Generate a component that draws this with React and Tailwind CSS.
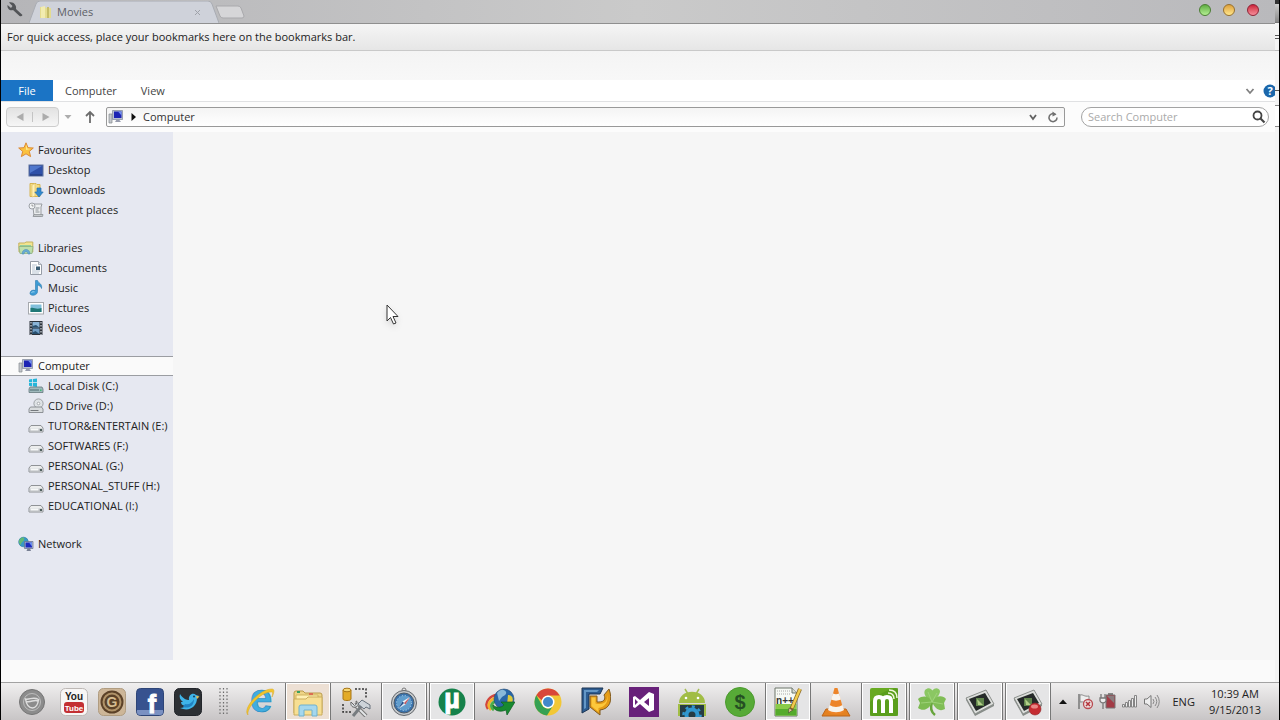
import React, { useState } from 'react';

const favourites = [
  { label: 'Desktop', icon: DesktopIcon },
  { label: 'Downloads', icon: DownloadsIcon },
  { label: 'Recent places', icon: RecentIcon },
];

const libraries = [
  { label: 'Documents', icon: DocumentIcon },
  { label: 'Music', icon: MusicIcon },
  { label: 'Pictures', icon: PictureIcon },
  { label: 'Videos', icon: VideoIcon },
];

const drives = [
  { label: 'Local Disk (C:)', icon: SystemDriveIcon },
  { label: 'CD Drive (D:)', icon: CdDriveIcon },
  { label: 'TUTOR&ENTERTAIN (E:)', icon: DriveIcon },
  { label: 'SOFTWARES (F:)', icon: DriveIcon },
  { label: 'PERSONAL (G:)', icon: DriveIcon },
  { label: 'PERSONAL_STUFF (H:)', icon: DriveIcon },
  { label: 'EDUCATIONAL (I:)', icon: DriveIcon },
];

const groups = [
  { label: 'Favourites', icon: StarIcon, items: favourites },
  { label: 'Libraries', icon: LibrariesIcon, items: libraries },
  { label: 'Computer', icon: ComputerIcon, items: drives },
  { label: 'Network', icon: NetworkIcon, items: [] },
];

const pinned = [
  { name: 'YouTube', icon: YouTubeIcon },
  { name: 'Grooveshark', icon: GrooveIcon },
  { name: 'Facebook', icon: FacebookIcon },
  { name: 'Twitter', icon: TwitterIcon },
];

const tasks = [
  { name: 'Internet Explorer', icon: ExplorerIcon, open: false },
  { name: 'File Explorer', icon: FoldersIcon, open: true, warm: true },
  { name: 'SQL Tools', icon: ToolsIcon, open: false },
  { name: 'Safari', icon: CompassIcon, open: true },
  { name: 'uTorrent', icon: TorrentIcon, open: true },
  { name: 'Download Manager', icon: DownloadManagerIcon, open: false },
  { name: 'Chrome', icon: ChromeIcon, open: false },
  { name: 'VMware', icon: ArrowsIcon, open: false },
  { name: 'Visual Studio', icon: VisualStudioIcon, open: false },
  { name: 'Android Tools', icon: AndroidIcon, open: false },
  { name: 'Money', icon: MoneyIcon, open: false },
  { name: 'Notepad++', icon: NotepadIcon, open: true },
  { name: 'VLC', icon: ConeIcon, open: false },
  { name: 'Mobogenie', icon: MobogenieIcon, open: true },
  { name: 'Clover', icon: CloverIcon, open: true },
  { name: 'Screen Capture', icon: CaptureIcon, open: true },
  { name: 'Screen Recorder', icon: RecorderIcon, open: true },
];

/* ---------- navigation icons ---------- */

function SmallIcon({ children }) {
  return (
    <svg width="16" height="16" viewBox="0 0 16 16" className="shrink-0" aria-hidden="true">
      {children}
    </svg>
  );
}

function StarIcon() {
  return (
    <SmallIcon>
      <path d="M8 .8 10 5.7 15.3 6 11.3 9.4 12.6 14.6 8 11.8 3.4 14.6 4.7 9.4 .7 6 6 5.7Z" fill="#fbc23f" stroke="#dc8a35" strokeLinejoin="round" />
      <path d="M8 2.5 9.3 6.5 13 6.9 8 8Z" fill="#ffe88a" />
    </SmallIcon>
  );
}

function DesktopIcon() {
  return (
    <SmallIcon>
      <rect x="1" y="3" width="14" height="11" fill="#2f50a8" stroke="#5b6f9c" />
      <path d="M2 4h12L2 11Z" fill="#5077cc" />
      <path d="M2 13h12" stroke="#203570" />
    </SmallIcon>
  );
}

function DownloadsIcon() {
  return (
    <SmallIcon>
      <path d="M2 1.500h6l1 1h3v12H2Z" fill="#f5dd83" stroke="#d6b553" />
      <path d="M4 3 7 1.500v12.500l-3 1Z" fill="#fff1b5" stroke="#d8bd64" strokeWidth=".6" />
      <path d="M9 6h4v4h2.200L11 15 6.800 10H9Z" fill="#3389ce" stroke="#2671ae" strokeWidth=".7" />
    </SmallIcon>
  );
}

function RecentIcon() {
  return (
    <SmallIcon>
      <path d="M5 2h9l-1 3v9H6L5 5Z" fill="#eceef0" stroke="#9a9da2" />
      <path d="M5 14.500h9.500l.5-2H6Z" fill="#c4c7cb" stroke="#85898e" strokeWidth=".7" />
      <path d="M7.500 6h4M7.500 8h3M7.500 10h4" stroke="#777b82" strokeWidth=".8" />
      <circle cx="4" cy="4" r="3" fill="#f1f3f5" stroke="#9da1a7" />
      <path d="M4 2.500V4h1.500" stroke="#777" fill="none" strokeWidth=".7" />
    </SmallIcon>
  );
}

function LibrariesIcon() {
  return (
    <SmallIcon>
      <path d="M.8 3h6l1-1h7v10H1Z" fill="#f2e48f" stroke="#c4b160" />
      <path d="M2 5h11v7H2Z" fill="#94cda0" />
      <path d="M1 6.500h14l-1 7H2Z" fill="#bfe0ab" stroke="#86ad78" strokeWidth=".7" />
      <path d="M4 14c0-6 8-6 8 0h-2c0-3-4-3-4 0Z" fill="#68abd4" stroke="#4d8eb5" strokeWidth=".6" />
    </SmallIcon>
  );
}

function DocumentIcon() {
  return (
    <SmallIcon>
      <path d="M2.500 1.500h8l3 3v10h-11Z" fill="#fff" stroke="#969ca6" />
      <path d="M10.500 1.500v3h3" fill="#dbe1e9" stroke="#969ca6" strokeWidth=".8" />
      <path d="M4 5h5M4 7h3M4 9h3M4 11h8M4 13h7" stroke="#a3b2c4" strokeWidth=".8" />
      <path d="M8 6.500h4v3.500H8Z" fill="#3d5f76" />
    </SmallIcon>
  );
}

function MusicIcon() {
  return (
    <SmallIcon>
      <path d="M7.500.5h2c1 3 5 3 4 8-.5-2-2-3-4-3.500v6.500c0 4.500-8 5-7.500 1.500.3-2.500 3-3.500 5.500-2.500Z" fill="#3d9bd5" stroke="#2c78ab" strokeWidth=".6" />
      <path d="M3.500 12.500c1-.8 2-.8 3-.6" stroke="#a8dcf5" fill="none" />
    </SmallIcon>
  );
}

function PictureIcon() {
  return (
    <SmallIcon>
      <rect x=".5" y="2.500" width="15" height="11.500" fill="#fff" stroke="#a6a9ae" />
      <path d="M2.500 4.500h11v7.500h-11Z" fill="#80bfdb" />
      <path d="M2.500 8c4-1 5 2 11 0v4h-11Z" fill="#1f7876" />
    </SmallIcon>
  );
}

function VideoIcon() {
  return (
    <SmallIcon>
      <path d="M1.500 1h13v14h-13Z" fill="#2c323a" />
      <path d="M4.500 2h7v5.500h-7Z" fill="#8ab4d6" />
      <path d="M4.500 8.500h7V14h-7Z" fill="#6e9cc4" />
      <path d="M4.500 7.500V6L8 5l3.500 2.500ZM4.500 14v-1.500l3-1.500 4 3Z" fill="#28506f" />
      <path d="M3 2v13M13 2v13" stroke="#d3d9df" strokeWidth="1.200" strokeDasharray="1.500 1.500" />
    </SmallIcon>
  );
}

function ComputerIcon() {
  return (
    <SmallIcon>
      <path d="M1 5h3v9H1Z" fill="#c4c7cc" stroke="#85898e" strokeWidth=".7" />
      <path d="M4.500 1.500h10v9h-10Z" fill="#b8c0d2" stroke="#7d8598" strokeWidth=".7" />
      <path d="M6 2.500h7.500v6.500H6Z" fill="#1c23b4" />
      <path d="M10 2.500h3.500v4Z" fill="#7290ee" />
      <path d="M8.500 10.500h2.500l2 2.500H7Z" fill="#969bad" />
    </SmallIcon>
  );
}

function DriveIcon() {
  return (
    <SmallIcon>
      <path d="M3 7.500h10l2 2.500v4H1v-4Z" fill="#eceded" stroke="#8f9296" strokeLinejoin="round" />
      <path d="M1.500 10.500h13v3h-13Z" fill="#b9bcc0" />
      <path d="M2.500 10.500h8v2h-8Z" fill="#f7f8f8" />
      <path d="M12 11h2v2h-2Z" fill="#4f5f5e" />
    </SmallIcon>
  );
}

function SystemDriveIcon() {
  return (
    <SmallIcon>
      <path d="M1 1.500 4.200 1v3.300H1ZM5 1l4-.6v3.900H5ZM1 5h3.200v3.300L1 7.800ZM5 5h4v4l-4-.6Z" fill="#25b6da" />
      <path d="M2 9h12l1 2v3.500H1V11Z" fill="#a0b9bd" stroke="#64787d" strokeWidth=".8" />
      <path d="M2 11.500h9v1H2Z" fill="#4d6b70" />
      <path d="M12 11.500h1.500V13H12Z" fill="#3cbb75" />
    </SmallIcon>
  );
}

function CdDriveIcon() {
  return (
    <SmallIcon>
      <circle cx="10.500" cy="5.500" r="4.600" fill="#dfe3e6" stroke="#8e9296" strokeWidth=".8" />
      <circle cx="10.500" cy="5.500" r="1.300" fill="#fff" stroke="#8e9296" strokeWidth=".7" />
      <path d="M2.500 9h11l1.500 2v3.500H1V11Z" fill="#d9dcde" stroke="#85898d" strokeWidth=".9" />
      <path d="M2.500 12.500h8" stroke="#74787c" />
    </SmallIcon>
  );
}

function NetworkIcon() {
  return (
    <SmallIcon>
      <circle cx="5.500" cy="6" r="4.800" fill="#3898c6" stroke="#29799f" strokeWidth=".6" />
      <path d="M2 3c3-3 5-1 4 1S3 6 3 9C0 7 1 4 2 3Z" fill="#62ba75" />
      <path d="M6.500 5.500h8.500v7H6.500Z" fill="#b4bfd4" stroke="#5f6b8a" strokeWidth=".7" />
      <path d="M7.500 6.500h6.500v5H7.500Z" fill="#1c29bd" />
      <path d="M11 6.500h3v4Z" fill="#6d93ee" />
      <path d="M9.500 12.500h2.500l1 2.500H8.500Z" fill="#777f93" />
    </SmallIcon>
  );
}

/* ---------- taskbar icons ---------- */

function AppIcon({ children }) {
  return (
    <svg width="30" height="30" viewBox="0 0 30 30" className="shrink-0" fontFamily="Liberation Sans, sans-serif" aria-hidden="true">
      {children}
    </svg>
  );
}

function StartIcon() {
  return (
    <AppIcon>
      <circle cx="15" cy="15" r="12.500" fill="#8c8c8c" stroke="#747474" />
      <circle cx="15" cy="15" r="8.500" fill="none" stroke="#bdbdbd" />
      <path d="M8.500 12c4 1 8-3 13 .5-.5 5-3 8.500-6 8.500-4 0-6-3-7-9Zm.5 2.500c5 1.500 8-2.500 12-.5" fill="none" stroke="#dedede" strokeWidth="1.500" />
    </AppIcon>
  );
}

function YouTubeIcon() {
  return (
    <AppIcon>
      <rect x="1.500" y="1.500" width="27" height="27" rx="5" fill="#f8f6f5" stroke="#bdb8b5" />
      <text x="15" y="13" textAnchor="middle" fontSize="10" fontWeight="700" fill="#222">You</text>
      <rect x="5" y="15" width="20" height="11" rx="3" fill="#c32f32" />
      <text x="15" y="23.500" textAnchor="middle" fontSize="8" fontWeight="700" fill="#fff">Tube</text>
    </AppIcon>
  );
}

function GrooveIcon() {
  return (
    <AppIcon>
      <rect x="1.500" y="1.500" width="27" height="27" rx="5" fill="#cdb698" stroke="#b09c80" />
      <circle cx="15" cy="15" r="11.500" fill="#5b4128" />
      <circle cx="15" cy="15" r="8.500" fill="none" stroke="#b09369" strokeWidth="2" />
      <text x="15" y="20" textAnchor="middle" fontSize="14" fontWeight="700" fill="#d5bd92">G</text>
    </AppIcon>
  );
}

function FacebookIcon() {
  return (
    <AppIcon>
      <rect x="1.500" y="1.500" width="27" height="27" rx="4" fill="#37528f" stroke="#2e4577" />
      <path d="M2 23h26v2q0 3-3 3H5q-3 0-3-3Z" fill="#7b91c2" />
      <text x="17" y="26" textAnchor="middle" fontSize="25" fontWeight="700" fill="#fff" stroke="#fff">f</text>
    </AppIcon>
  );
}

function TwitterIcon() {
  return (
    <AppIcon>
      <rect x="1.500" y="1.500" width="27" height="27" rx="5" fill="#2d3034" stroke="#22252a" />
      <path d="M7 7c3 5 7 6 9 6-1-5 4-8 7-5l3 1-2 2c0 9-8 14-17 10 3 0 4-1 5-2-3-1-4-2-4-4h2c-3-2-4-5-3-8Z" fill="#3fb4e8" />
      <path d="M12 17c4 1 7-1 9-5 0 7-5 10-11 8Z" fill="#2183c3" />
      <path d="m23 9 3.500.5L24 12Z" fill="#edbd4a" />
      <circle cx="21" cy="9.500" r="1" fill="#163c56" />
    </AppIcon>
  );
}

function ExplorerIcon() {
  return (
    <AppIcon>
      <text x="16" y="25" textAnchor="middle" fontSize="40" fontWeight="700" fill="#42addf" stroke="#2485bc" strokeWidth=".6">e</text>
      <path d="M3 28C-3 22 14 2 27 2c3 0 2 4 0 8 1-4 1-5-1-5C15 5 1 22 3 28Z" fill="#f2c52d" stroke="#d9a71e" strokeWidth=".5" />
    </AppIcon>
  );
}

function FoldersIcon() {
  return (
    <AppIcon>
      <path d="M1 6q0-2 2-2h7l2 2h15q2 0 2 2v18H1Z" fill="#eed486" stroke="#ba9b4b" />
      <path d="M3 8h22v17H3Z" fill="#fff0b3" stroke="#d1b461" />
      <path d="M1 12h12l2-2h14v18H1Z" fill="#f7df93" stroke="#cbad5c" />
      <path d="M4 5h3" stroke="#37a060" strokeWidth="2" />
      <path d="M16 7h4" stroke="#dc6d52" strokeWidth="2" />
      <path d="M6 29V20q0-2 2-2h14q2 0 2 2v9h-5v-6h-8v6Z" fill="#a5d7ed" stroke="#6fb1cf" />
    </AppIcon>
  );
}

function ToolsIcon() {
  return (
    <AppIcon>
      <path d="M2 3v9c0 2 8 2 8 0V3" fill="#e3ab27" stroke="#a87617" />
      <ellipse cx="6" cy="3" rx="4" ry="1.800" fill="#f6d773" stroke="#a87617" />
      <path d="M14 2h11v10M2 17v8h9" fill="none" stroke="#333" strokeWidth="1.500" strokeDasharray="2 1.500" />
      <path d="m13 17 12 12" stroke="#777" strokeWidth="4" />
      <path d="m13 17 12 12" stroke="#e3e5e7" strokeWidth="2" />
      <path d="M10 15c-1 4 2 6 5 5s3-5 0-6l.5 3-2 1.500Z" fill="#d5d9dd" stroke="#666" />
      <path d="m12 29 10-12" stroke="#777c80" strokeWidth="3" />
      <path d="m17 17 4-4 8 5v4l-4-2-2 2Z" fill="#cdd3d9" stroke="#68727d" />
    </AppIcon>
  );
}

function CompassIcon() {
  return (
    <AppIcon>
      <circle cx="15" cy="3" r="2" fill="none" stroke="#777" />
      <circle cx="15" cy="16" r="12.500" fill="#c4c8cb" stroke="#65696e" />
      <circle cx="15" cy="16" r="10" fill="#3971aa" stroke="#4c5a68" />
      <circle cx="15" cy="16" r="7.500" fill="#609dcd" stroke="#b6d6ed" strokeDasharray="1 2" />
      <path d="m21 10-4.500 7.500-3-3Z" fill="#eff5fa" />
      <path d="m9 22 4.500-7.500 3 3Z" fill="#dce9f4" />
      <path d="m21 10-4.500 7.500L15 16Z" fill="#c35a61" />
      <path d="m9 22 4.500-7.500L15 16Z" fill="#264e89" />
    </AppIcon>
  );
}

function TorrentIcon() {
  return (
    <AppIcon>
      <circle cx="15" cy="15" r="13.500" fill="#16824b" />
      <text x="15" y="21" textAnchor="middle" fontSize="27" fontWeight="700" fill="#fff" stroke="#fff">µ</text>
    </AppIcon>
  );
}

function DownloadManagerIcon() {
  return (
    <AppIcon>
      <path d="M3 22C-2 15 7 7 13 8" fill="none" stroke="#d2463d" strokeWidth="2.500" />
      <path d="M6 23C0 17 7 10 14 11" fill="none" stroke="#f3b22f" strokeWidth="2.500" />
      <path d="M9 23c-5-4-2-9 6-10" fill="none" stroke="#4bae48" strokeWidth="3" />
      <circle cx="19" cy="12" r="10" fill="#2866a7" stroke="#244a70" strokeWidth=".6" />
      <path d="M12 6c4-5 8-3 9-1s-2 4-4 5l-3 4Z" fill="#88b8d8" />
      <path d="M23 8c4 0 6 3 4 8l-5 2Z" fill="#dcc93b" />
      <path d="M8 18c3 3 8 3 11 0l-3-3 14 0-8 13-1-5c-7 3-13 0-13-5Z" fill="#178a30" stroke="#115b27" strokeWidth=".7" />
    </AppIcon>
  );
}

function ChromeIcon() {
  return (
    <AppIcon>
      <circle cx="15" cy="15" r="13.500" fill="#f2c735" />
      <path d="M3.300 8.200A13.500 13.500 0 0 1 26.700 8.500H15a6.500 6.500 0 0 0-6 5Z" fill="#d9473a" />
      <path d="M3.300 8.200A13.500 13.500 0 0 0 14 28.500l5.500-9A6.500 6.500 0 0 1 9 18Z" fill="#36a153" />
      <circle cx="15" cy="15" r="6.500" fill="#fff" />
      <circle cx="15" cy="15" r="5" fill="#4289ca" />
    </AppIcon>
  );
}

function ArrowsIcon() {
  return (
    <AppIcon>
      <path d="M1 1h21l-3 6H8v15l-7 4Z" fill="#2d5c91" stroke="#1c3553" />
      <path d="M3 3h15l-2 2H5v16l-2 1Z" fill="#6497c6" />
      <path d="M9 9h7v6h2c5 0 7-3 5-7l5-6c4 11 1 20-9 21v5L9 20Z" fill="#e59b16" stroke="#805b20" />
      <path d="M10.500 10.500h4v6c9 2 12-2 12-9 1 8-3 13-9 13.500V25l-7-6Z" fill="#fcc83c" />
    </AppIcon>
  );
}

function VisualStudioIcon() {
  return (
    <AppIcon>
      <path d="M0 0h30v30H0Z" fill="#68217a" />
      <path fillRule="evenodd" d="m20 5 5 2v16l-5 2-9-8-5 4-2-1V10l2-1 5 4Zm0 6-5 4 5 4ZM6 12v6l3-3Z" fill="#fff" />
    </AppIcon>
  );
}

function AndroidIcon() {
  return (
    <AppIcon>
      <path d="m8 2 3 5M22 2l-3 5" stroke="#a4bd51" strokeWidth="1.500" />
      <path d="M2 16C2 1 28 1 28 16Z" fill="#a1bd45" />
      <circle cx="9" cy="11" r="1.300" fill="#fff" />
      <circle cx="21" cy="11" r="1.300" fill="#fff" />
      <path d="M1 17h28v12H1Z" fill="#a1bd45" />
      <path d="M3 18h24v12H3Z" fill="#263b43" />
      <circle cx="15" cy="28" r="5.500" fill="none" stroke="#3197cf" strokeWidth="4" />
      <circle cx="15" cy="28" r="8.500" fill="none" stroke="#3197cf" strokeWidth="2.500" strokeDasharray="3 3.600" />
    </AppIcon>
  );
}

function MoneyIcon() {
  return (
    <AppIcon>
      <circle cx="15" cy="15" r="14.500" fill="#57aa37" stroke="#4b9b2e" />
      <text x="15" y="22" textAnchor="middle" fontSize="20" fontWeight="700" fill="#254f23">$</text>
    </AppIcon>
  );
}

function NotepadIcon() {
  return (
    <AppIcon>
      <path d="M2 1h17l5 5v23H2Z" fill="#f7faf5" stroke="#6c746b" />
      <path d="M2.500 17h21v11.500h-21Z" fill="#8acb49" />
      <path d="M2.500 22h21v6.500h-21Z" fill="#55ab2d" />
      <path d="M19 1v5h5" fill="#d5dad3" stroke="#6c746b" />
      <path d="M4 4h14M4 7h14" stroke="#aaa" strokeDasharray="1 1" />
      <text x="12" y="17" textAnchor="middle" fontSize="10" fontWeight="700" fill="#333">n++</text>
      <path d="M27 2 18 23" stroke="#876825" strokeWidth="4" />
      <path d="M27 2 19 21" stroke="#f1ca4c" strokeWidth="2.500" />
      <path d="m16 21-.5 5 4-3Z" fill="#e9c995" stroke="#333" strokeWidth=".5" />
    </AppIcon>
  );
}

function ConeIcon() {
  return (
    <AppIcon>
      <path d="M5 22h20l4 7H1Z" fill="#e48120" stroke="#bd6519" />
      <path d="M13.500 1h3L23 25c-4 3-12 3-16 0Z" fill="#ed8428" />
      <path d="m12 6.500-2 6c3 1.500 7 1.500 10 0l-2-6c-2 1-4 1-6 0ZM8.500 18 7 23c5 3 11 3 16 0l-1.500-5c-4 2.500-9 2.500-13 0Z" fill="#f7f3ed" />
    </AppIcon>
  );
}

function MobogenieIcon() {
  return (
    <AppIcon>
      <rect x="1" y="1" width="28" height="28" rx="2" fill="#68aa22" />
      <path d="M1 15C10 7 18 2 29 1v28H1Z" fill="#4f9417" opacity=".55" />
      <path d="M6 26V14q0-4 4-4t4 4v12m0-12q0-4 4-4t4 4v12" fill="none" stroke="#fff" strokeWidth="4" />
      <path d="M19 6q6 0 6 6M20 3q8 0 8 8" fill="none" stroke="#eef8d9" strokeWidth="1.500" />
    </AppIcon>
  );
}

function CloverIcon() {
  return (
    <AppIcon>
      <path d="M15 15c-2 6-1 10 3 13" fill="none" stroke="#67a43c" strokeWidth="2.500" />
      <path d="M15 15C9 11 6 7 8 3c3-3 6-2 7.500.5C18 0 22 1 23 4c0 4-4 8-8 11Z" fill="#8bc763" />
      <path d="M15 15c4-7 11-7 14-3l-2 4 1 6c-5 3-10 0-13-7Z" fill="#80bd56" />
      <path d="M15 15c-3-6-9-7-14-3l2 4-2 5c5 4 12 1 14-6Z" fill="#7dbb52" />
      <path d="M15 15 11 5m4 10 5-9m-5 9 11 2m-11-2-11 1" stroke="#a4d580" strokeWidth=".8" />
    </AppIcon>
  );
}

function CaptureShape() {
  return (
    <>
      <path d="m1 11 20-8 8 14-19 10Z" fill="#dcdedb" stroke="#8b8f8c" />
      <path d="m4 12 16-6 6 10-15 8Z" fill="#252a29" />
      <path d="M11 11h8v8h-8Z" fill="#60854c" />
      <path d="m12 12 6 6h-5Z" fill="#b1ce88" />
      <path d="m10 27 19-10v2L10 29 1 13v-2Z" fill="#888d89" />
    </>
  );
}

function CaptureIcon() {
  return (
    <AppIcon>
      <CaptureShape />
    </AppIcon>
  );
}

function RecorderIcon() {
  return (
    <AppIcon>
      <CaptureShape />
      <circle cx="22" cy="22" r="6" fill="#c52c31" stroke="#8e2529" strokeWidth=".6" />
      <ellipse cx="21.500" cy="19.500" rx="3.500" ry="2" fill="#e98785" />
    </AppIcon>
  );
}

/* ---------- window parts ---------- */

function TitleBar() {
  return (
    <div className="flex h-6 items-end border-b border-[#8f8f8f] bg-linear-to-r from-[#b5b5b8] via-[#cacaca] to-[#b9b9bc]">
      <button type="button" aria-label="Settings" className="mb-1 w-7 pl-[5px]">
        <svg width="18" height="18" viewBox="0 0 18 18">
          <path d="M3 1.500 6.500 5 5 7 1.500 4C1 8 4 10 7 9l6.500 6q2 1 3-1L10 8C11 4 7 0 3 1.500Z" fill="#525457" />
        </svg>
      </button>
      <div className="relative flex h-[22px] w-[190px] items-center pl-[10px] pr-[18px]">
        <svg className="absolute inset-0 h-full w-full" viewBox="0 0 190 22" preserveAspectRatio="none" aria-hidden="true">
          <path d="M0 22 7 3q1-3 4-3h168q3 0 4 3l7 19" fill="#cfd2da" stroke="#a9acb3" />
        </svg>
        <svg className="relative" width="14" height="14" viewBox="0 0 14 14" aria-hidden="true">
          <path d="M1 2h5l1 1h5v10H1Z" fill="#e4dc91" />
          <path d="m2 2 4-1v12H2Z" fill="#f2ecb0" />
          <path d="M8 2h2v11H8Z" fill="#c5bc68" />
        </svg>
        <span className="relative ml-1 text-[#5d6067]">Movies</span>
        <button type="button" aria-label="Close tab" className="relative ml-auto">
          <svg width="7" height="7" viewBox="0 0 7 7">
            <path d="m1 1 5 5M6 1 1 6" stroke="#9fa2a9" />
          </svg>
        </button>
      </div>
      <button type="button" aria-label="New tab" className="-ml-1 mb-1">
        <svg width="30" height="14" viewBox="0 0 30 14">
          <path d="M1 1h22q2 0 3 2l3 8q0 2-2 2H8q-2 0-3-2Z" fill="#d6d6d8" stroke="#a9a9ac" />
        </svg>
      </button>
      <div className="mb-[7px] ml-auto mr-4 flex gap-3">
        <button type="button" aria-label="Minimise" className="h-3 w-3 rounded-full border border-[#4a7e32] bg-linear-to-b from-[#5fae42] to-[#b4ef92]" />
        <button type="button" aria-label="Maximise" className="h-3 w-3 rounded-full border border-[#97702d] bg-linear-to-b from-[#dda13b] to-[#ffe78b]" />
        <button type="button" aria-label="Close" className="h-3 w-3 rounded-full border border-[#8d2335] bg-linear-to-b from-[#cc1d3b] to-[#f58c9b]" />
      </div>
    </div>
  );
}

function Ribbon() {
  return (
    <div className="flex h-[22px] items-center border-b border-[#e0e1e3] bg-white text-[#444]">
      <button type="button" className="h-full w-[52px] bg-[#1b74c5] text-white">File</button>
      <button type="button" className="ml-3">Computer</button>
      <button type="button" className="ml-6">View</button>
      <div className="ml-auto flex shrink-0 items-center">
        <button type="button" aria-label="Expand ribbon" className="mr-2">
          <svg width="10" height="8" viewBox="0 0 10 8">
            <path d="m1.500 2 3.500 4L8.500 2" fill="none" stroke="#808080" strokeWidth="1.800" />
          </svg>
        </button>
        <button type="button" aria-label="Help" className="w-3 overflow-hidden">
          <svg width="14" height="14" viewBox="0 0 14 14" className="max-w-none">
            <circle cx="7" cy="7" r="6.500" fill="#1b67ab" />
            <text x="7" y="11" textAnchor="middle" fontSize="11" fontWeight="700" fill="#fff">?</text>
          </svg>
        </button>
      </div>
    </div>
  );
}

function AddressRow() {
  const [query, setQuery] = useState('');

  return (
    <div className="flex h-[30px] items-center bg-[#fcfcfc] pb-px pl-[5px] pr-[6px]">
      <div className="flex h-5 w-[53px] shrink-0 items-center rounded border border-[#cdcdcd] bg-linear-to-b from-[#e2e2e2] to-[#f6f6f6]">
        <button type="button" aria-label="Back" className="flex flex-1 justify-center border-r border-[#c4c4c4]">
          <svg width="8" height="10" viewBox="0 0 8 10">
            <path d="M7.500 1v8L.5 5Z" fill="#acacac" />
          </svg>
        </button>
        <button type="button" aria-label="Forward" className="flex flex-1 justify-center">
          <svg width="8" height="10" viewBox="0 0 8 10">
            <path d="M.5 1v8l7-4Z" fill="#acacac" />
          </svg>
        </button>
      </div>
      <button type="button" aria-label="Recent locations" className="ml-[5px]">
        <svg width="8" height="6" viewBox="0 0 8 6">
          <path d="M.5 1h7L4 5Z" fill="#adadad" />
        </svg>
      </button>
      <button type="button" aria-label="Up one level" className="ml-3 mr-[10px]">
        <svg width="12" height="14" viewBox="0 0 12 14">
          <path d="M6 13V2M2 6l4-4 4 4" fill="none" stroke="#6c6c6c" strokeWidth="1.800" />
        </svg>
      </button>
      <div className="flex h-5 flex-1 items-center rounded-xs border border-[#999] bg-linear-to-b from-[#f4f4f4] to-white px-px">
        <ComputerIcon />
        <svg className="mx-[7px]" width="5" height="8" viewBox="0 0 5 8" aria-hidden="true">
          <path d="M.5 0v8L5 4Z" fill="#111" />
        </svg>
        <button type="button" className="text-[#333]">Computer</button>
        <button type="button" aria-label="Previous locations" className="ml-auto mr-[10px]">
          <svg width="8" height="8" viewBox="0 0 8 8">
            <path d="m1 2 3 4 3-4" fill="none" stroke="#626262" strokeWidth="1.800" />
          </svg>
        </button>
        <button type="button" aria-label="Refresh" className="mr-1">
          <svg width="12" height="12" viewBox="0 0 12 12">
            <path d="M8.500 3.500a4 4 0 1 0 1.500 3" fill="none" stroke="#707070" strokeWidth="1.500" />
            <path d="M5.500.5 9.500 3.500 5.500 5.500Z" fill="#707070" />
          </svg>
        </button>
      </div>
      <form className="ml-4 flex h-5 w-[188px] shrink-0 items-center rounded-full border border-[#a3a3a3] bg-white px-[6px]" onSubmit={(e) => e.preventDefault()}>
        <input
          type="search"
          aria-label="Search Computer"
          placeholder="Search Computer"
          value={query}
          onChange={(e) => setQuery(e.target.value)}
          className="min-w-0 flex-1 bg-transparent outline-none placeholder:text-[#aaa]"
        />
        <button type="submit" aria-label="Search" className="-mr-1">
          <svg width="14" height="14" viewBox="0 0 14 14">
            <circle cx="5.500" cy="5.500" r="4" fill="none" stroke="#444" strokeWidth="1.800" />
            <path d="m8.500 8.500 4 4" stroke="#444" strokeWidth="2.200" />
          </svg>
        </button>
      </form>
    </div>
  );
}

function TreeGroup({ group, selected, onSelect }) {
  const Icon = group.icon;
  const active = selected === group.label;

  return (
    <div>
      <button
        type="button"
        onClick={() => onSelect(group.label)}
        className={`flex h-5 w-full items-center gap-1 border-y pl-[17px] ${
          active ? 'border-[#9b9da2] bg-[#fafafa]' : 'border-transparent'
        }`}
      >
        <Icon />
        {group.label}
      </button>
      {group.items.map((item) => (
        <button
          key={item.label}
          type="button"
          onClick={() => onSelect(item.label)}
          className="flex h-5 w-full items-center gap-1 whitespace-nowrap pl-[27px]"
        >
          <item.icon />
          {item.label}
        </button>
      ))}
    </div>
  );
}

function Tray() {
  return (
    <div className="ml-auto flex shrink-0 items-center text-[#222]">
      <button type="button" aria-label="Show hidden icons" className="mr-[10px]">
        <svg width="8" height="5" viewBox="0 0 8 5">
          <path d="M0 5 4 .5 8 5Z" fill="#111" />
        </svg>
      </button>
      <div className="flex items-center gap-[5px]">
        <svg width="17" height="17" viewBox="0 0 17 17" aria-label="Action centre">
          <path d="M2 1v15" stroke="#777" strokeWidth="1.500" />
          <path d="M3 2c3-1 4 2 9 1v7c-4 1-5-2-9-1Z" fill="#eee" stroke="#8b8b8b" />
          <circle cx="11" cy="11" r="4.500" fill="#e9dddd" stroke="#b94a50" strokeWidth="1.300" />
          <path d="m9 9 4 4m0-4-4 4" stroke="#b5333a" strokeWidth="1.500" />
        </svg>
        <svg width="17" height="17" viewBox="0 0 17 17" aria-label="Battery">
          <path d="M7 2h9v13H7Z" fill="#a33b46" stroke="#777" />
          <path d="M9 1h5" stroke="#666" strokeWidth="1.500" />
          <path d="m8 3 7 7V3Z" fill="#8a7c7e" />
          <path d="M2 1v4M6 1v4M1 5h6v3q-1 2-3 2t-3-2Zm3 5v6" fill="#eee" stroke="#777" strokeWidth="1.300" />
        </svg>
        <svg width="17" height="17" viewBox="0 0 17 17" aria-label="Wireless signal">
          <path d="M1.500 11.500h2V14h-2Zm3-2h2V14h-2Zm3-2h2V14h-2Zm3-2h2V14h-2Zm3-3h2V14h-2Z" fill="#eee" stroke="#7b7b7b" strokeWidth=".9" />
        </svg>
        <svg width="17" height="17" viewBox="0 0 17 17" aria-label="Volume">
          <path d="M1.500 6h2.500l4-3.500v12L4 11H1.500Z" fill="#eee" stroke="#777" />
          <path d="M10 6q2 2.500 0 5m2-7q3.500 4.500 0 9m2-11q4.500 6.500 0 13" fill="none" stroke="#888" />
        </svg>
      </div>
      <span className="ml-3">ENG</span>
      <div className="ml-[14px] mr-[18px] flex flex-col items-center leading-4">
        <span>10:39 AM</span>
        <span>9/15/2013</span>
      </div>
    </div>
  );
}

function Taskbar() {
  return (
    <div className="flex h-[38px] shrink-0 items-stretch border-t border-[#a2a2a2] bg-linear-to-b from-[#f0efef] to-[#c8c5c6]">
      <div className="flex shrink-0 items-center pl-4">
        <button type="button" aria-label="Start">
          <StartIcon />
        </button>
        <div className="ml-3 flex gap-2">
          {pinned.map((app) => (
            <button key={app.name} type="button" aria-label={app.name}>
              <app.icon />
            </button>
          ))}
        </div>
      </div>
      <svg className="ml-4 mr-2 mt-1 shrink-0" width="9" height="30" viewBox="0 0 9 30" aria-hidden="true">
        <path d="M1 1v28M4.500 1v28M8 1v28" stroke="#6c6c6c" strokeWidth="1.200" strokeDasharray="1.500 2" />
      </svg>
      <div className="flex min-w-0 overflow-hidden">
        {tasks.map((task) => (
          <div key={task.name} className="flex w-12 shrink-0 px-px">
            <button
              type="button"
              aria-label={task.name}
              className={`flex w-full items-center justify-center border-x ${
                task.open
                  ? `border-[#777] shadow-[inset_0_0_0_1px_#ffffff] ${task.warm ? 'bg-[#ede0d4]' : 'bg-[#e5e5e6]'}`
                  : 'border-transparent'
              }`}
            >
              <task.icon />
            </button>
          </div>
        ))}
      </div>
      <Tray />
    </div>
  );
}

// Sliver of the window behind, visible past the right edge
function BackWindow() {
  return (
    <div className="flex w-1 shrink-0 flex-col overflow-hidden bg-[#f4f4f4]" aria-hidden="true">
      <div className="h-1 bg-[#333]" />
      <div className="h-[19px] border-b border-[#777] bg-linear-to-b from-[#ccc] to-[#888]" />
      <div className="flex h-7 items-center border-b border-[#bbb]">
        <div className="h-1 w-full border-y border-[#555]" />
      </div>
      <div className="mt-[39px] h-px bg-[#555]" />
      <div className="mt-[14px] h-[22px] border-y border-[#888] bg-white" />
    </div>
  );
}

const App = () => {
  const [selected, setSelected] = useState('Computer');

  return (
    <div className="relative flex min-h-screen flex-col border-x border-black bg-[#f6f6f6] font-['Open_Sans','Noto_Sans',sans-serif] text-[11px] leading-4 text-[#222]">
      <div className="flex flex-1">
        <div className="flex min-w-0 flex-1 flex-col">
          <TitleBar />
          <div className="flex h-[27px] items-center border-b border-[#c9c9c9] bg-linear-to-b from-[#f5f5f5] to-[#e6e6e6] px-[6px]">
            <p>For quick access, place your bookmarks here on the bookmarks bar.</p>
          </div>
          <div className="h-[29px] bg-linear-to-b from-[#f4f4f4] to-[#f8f8f8]" />
          <Ribbon />
          <AddressRow />
          <div className="flex flex-1">
            <nav className="flex w-[172px] shrink-0 flex-col gap-[18px] bg-[#e6e8f1] pt-2" aria-label="Folders">
              {groups.map((group) => (
                <TreeGroup key={group.label} group={group} selected={selected} onSelect={setSelected} />
              ))}
            </nav>
            <main className="flex-1" />
          </div>
          <div className="h-[22px] bg-[#fafafa]" />
        </div>
        <BackWindow />
      </div>
      <Taskbar />

      <svg className="pointer-events-none absolute left-[385px] top-[304px] drop-shadow-md" width="14" height="22" viewBox="0 0 14 22" aria-hidden="true">
        <path d="M1 1v16l3.500-3.500L7.500 20l2.500-1-3-6.500h5Z" fill="#fff" stroke="#333" />
      </svg>
    </div>
  );
};

export default App;
